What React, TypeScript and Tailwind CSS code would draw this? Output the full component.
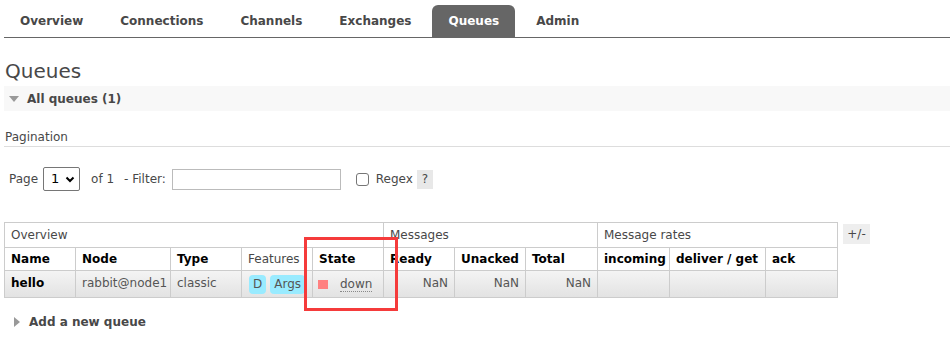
import React from "react";

const tabs = ["Overview", "Connections", "Channels", "Exchanges", "Queues", "Admin"];

const cols = [
  { label: "Name", w: "w-[71px]" },
  { label: "Node", w: "w-[95px]" },
  { label: "Type", w: "w-[71px]" },
  { label: "Features", w: "w-[71px]", normal: true },
  { label: "State", w: "w-[71px]" },
  { label: "Ready", w: "w-[71px]" },
  { label: "Unacked", w: "w-[71px]" },
  { label: "Total", w: "w-[72px]" },
  { label: "incoming", w: "w-[72px]" },
  { label: "deliver / get", w: "w-[96px]" },
  { label: "ack", w: "w-[72px]" },
];

export default function App() {
  return (
    <div className="relative w-[950px] h-[341px] overflow-hidden bg-white pl-1 font-['DejaVu_Sans',Verdana,sans-serif] text-[12px] text-[#484848]">
      {/* Tabs */}
      <nav className="flex gap-[5px] pt-[5px] border-b border-[#666]">
        {tabs.map((t) => (
          <div
            key={t}
            className={
              "h-[32px] px-4 flex items-center font-bold rounded-t-[6px] " +
              (t === "Queues" ? "bg-[#666] text-white" : "text-[#484848]")
            }
          >
            {t}
          </div>
        ))}
      </nav>

      <h1 className="mt-[21px] text-[20px] leading-[24px] pl-px text-[#484848]">Queues</h1>

      <div className="mt-[3px] h-[25px] bg-[#f8f8f8] flex items-center gap-[7px] pl-1 font-bold">
        <svg width="12" height="8" viewBox="0 0 12 8">
          <path d="M1 1 L11 1 L6 7 Z" fill="#999" />
        </svg>
        <span>All queues (1)</span>
      </div>

      <div className="mt-[19px] pl-px pb-[1px] border-b border-[#ddd] leading-[15px]">Pagination</div>

      {/* Pagination controls */}
      <div className="mt-[20px] flex items-center h-[24px] pl-[5px]">
        <span>Page</span>
        <div className="ml-[5px] w-[37px] h-[24px] border border-[#767676] rounded-[2px] flex items-center justify-between pl-[7px] pr-[4px] text-[13px] text-black">
          <span>1</span>
          <svg width="10" height="7" viewBox="0 0 10 7">
            <path d="M1.5 1.5 L5 5 L8.5 1.5" stroke="#000" strokeWidth="2" fill="none" />
          </svg>
        </div>
        <span className="ml-[11px]">of 1</span>
        <span className="ml-[10px]">- Filter:</span>
        <div className="ml-[6px] w-[169px] h-[21px] border border-[#bbb]" />
        <div className="ml-[15px] w-[13px] h-[13px] border border-[#767676] rounded-[3px] bg-white" />
        <span className="ml-[7px]">Regex</span>
        <span className="ml-[4px] w-[16px] h-[19px] bg-[#e8e8e8] flex items-center justify-center">?</span>
      </div>

      {/* Table */}
      <div className="mt-[31px] flex items-start gap-[5px]">
        <table className="border-collapse border border-[#ccc] text-[12px]">
          <thead>
            <tr className="h-[25px]">
              <th colSpan={5} className="border border-[#ccc] text-left font-normal pl-[6px]">Overview</th>
              <th colSpan={3} className="border border-[#ccc] text-left font-normal pl-[6px]">Messages</th>
              <th colSpan={3} className="border border-[#ccc] text-left font-normal pl-[6px]">Message rates</th>
            </tr>
            <tr className="h-[23px]">
              {cols.map((c) => (
                <th
                  key={c.label}
                  className={
                    c.w +
                    " border border-[#ccc] text-left pl-[6px] whitespace-nowrap " +
                    (c.normal ? "font-normal text-[#484848]" : "font-bold text-black")
                  }
                >
                  {c.label}
                </th>
              ))}
            </tr>
          </thead>
          <tbody>
            <tr className="h-[27px] bg-gradient-to-b from-[#f4f4f4] to-[#e2e2e2] text-[#555]">
              <td className="border border-[#ccc] pl-[6px] pb-[3px] font-bold text-black">hello</td>
              <td className="border border-[#ccc] pl-[6px] pb-[3px]">rabbit@node1</td>
              <td className="border border-[#ccc] pl-[6px] pb-[3px]">classic</td>
              <td className="border border-[#ccc] pl-[7px]">
                <div className="flex gap-[4px]">
                  <span className="h-[19px] px-[4px] rounded-[4px] bg-[#99ebff] flex items-center">D</span>
                  <span className="h-[19px] px-[4px] rounded-[4px] bg-[#99ebff] flex items-center">Args</span>
                </div>
              </td>
              <td className="border border-[#ccc] pl-[5px]">
                <div className="flex items-center">
                  <span className="w-[10px] h-[9px] bg-[#ff8080]" />
                  <span className="ml-[12px] border-b border-dotted border-[#888] leading-[14px]">down</span>
                </div>
              </td>
              <td className="border border-[#ccc] pr-[6px] pb-[3px] text-right">NaN</td>
              <td className="border border-[#ccc] pr-[6px] pb-[3px] text-right">NaN</td>
              <td className="border border-[#ccc] pr-[6px] pb-[3px] text-right">NaN</td>
              <td className="border border-[#ccc]" />
              <td className="border border-[#ccc]" />
              <td className="border border-[#ccc]" />
            </tr>
          </tbody>
        </table>
        <div className="mt-[2px] w-[27px] h-[20px] bg-[#eee] flex items-center justify-center">+/-</div>
      </div>

      <div className="mt-[15px] flex items-center gap-[9px] pl-[10px] font-bold">
        <svg width="6" height="10" viewBox="0 0 6 10">
          <path d="M0 0 L6 5 L0 10 Z" fill="#999" />
        </svg>
        <span>Add a new queue</span>
      </div>

      {/* Red annotation box */}
      <div className="absolute left-[304px] top-[237px] w-[94px] h-[74px] border-[3px] border-[#f53b3b]" />
    </div>
  );
}
